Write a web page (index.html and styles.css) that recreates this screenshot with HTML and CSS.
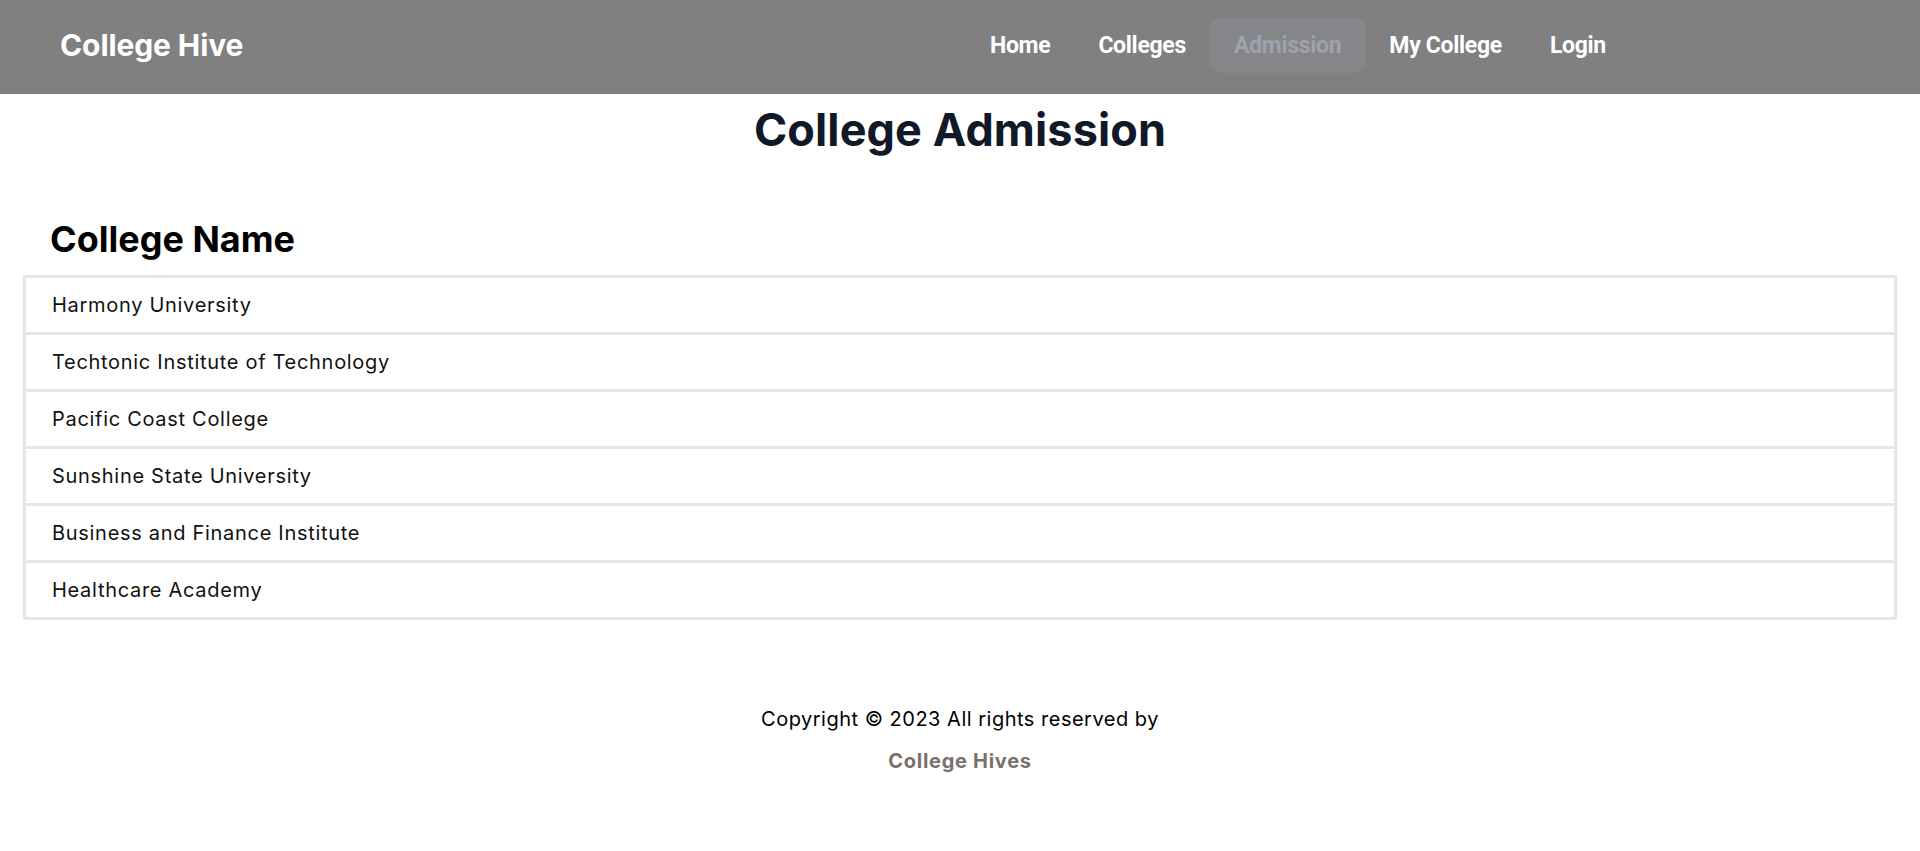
FILE: index.html
```html
<!DOCTYPE html>
<html lang="en">
<head>
<meta charset="utf-8">
<title>College Hive - Admission</title>
<link rel="stylesheet" href="styles.css">
</head>
<body>
<header class="navbar">
  <div class="navbar-start">
    <a class="logo" href="#">College Hive</a>
  </div>
  <nav class="menu">
    <a class="menu-item" href="#">Home</a>
    <a class="menu-item" href="#">Colleges</a>
    <a class="menu-item active" href="#">Admission</a>
    <a class="menu-item" href="#">My College</a>
    <a class="menu-item" href="#">Login</a>
  </nav>
</header>
<main class="content">
  <h1 class="page-title">College Admission</h1>
  <h2 class="section-title">College Name</h2>
  <ul class="college-list">
    <li class="college-row">Harmony University</li>
    <li class="college-row">Techtonic Institute of Technology</li>
    <li class="college-row">Pacific Coast College</li>
    <li class="college-row">Sunshine State University</li>
    <li class="college-row">Business and Finance Institute</li>
    <li class="college-row">Healthcare Academy</li>
  </ul>
</main>
<footer class="footer">
  <p class="copyright">Copyright © 2023 All rights reserved by</p>
  <p class="brand">College Hives</p>
</footer>
</body>
</html>
```
FILE: styles.css
```css
* { box-sizing: border-box; }
html, body { margin: 0; padding: 0; background: #ffffff; }
body { font-family: "Inter", "Noto Sans", sans-serif; color: #000; }

.navbar {
  height: 94px;
  background: #808080;
  display: flex;
  align-items: center;
  padding-bottom: 4px;
}
.navbar-start {
  width: 50%;
  padding-left: 60px;
}
.logo {
  color: #ffffff;
  font-family: "Inter", sans-serif;
  font-weight: 700;
  font-size: 30px;
  text-decoration: none;
  letter-spacing: -0.1px;
}
.menu {
  display: flex;
  align-items: center;
  padding-left: 6px;
}
.menu-item {
  display: flex;
  align-items: center;
  height: 55px;
  padding: 0 24px;
  border-radius: 9px;
  color: #ffffff;
  font-family: "Roboto", sans-serif;
  font-weight: 700;
  font-size: 23px;
  letter-spacing: -0.3px;
  text-decoration: none;
}
.menu-item.active {
  background: #86868a;
  color: #9ca3af;
}

.content { padding: 0 23px; }
.page-title {
  margin: 0;
  padding-top: 9px;
  text-align: center;
  font-size: 45px;
  font-weight: 700;
  color: #111827;
  line-height: 1.2;
  letter-spacing: 0.1px;
}
.section-title {
  margin: 61px 0 14px 27px;
  font-size: 36px;
  font-weight: 700;
  color: #000;
  line-height: 1.2;
}
.college-list {
  list-style: none;
  margin: 0;
  padding: 0;
  border: 3px solid #e6e6e6;
  border-bottom: 0;
}
.college-row {
  height: 57px;
  display: flex;
  align-items: center;
  padding-left: 26px;
  border-bottom: 3px solid #e6e6e6;
  font-size: 20px;
  letter-spacing: 0.7px;
  color: #111;
}

.footer {
  text-align: center;
  padding-top: 87px;
}
.copyright {
  margin: 0;
  font-size: 20px;
  letter-spacing: 0.5px;
  color: #000;
}
.brand {
  margin: 18px 0 0;
  font-size: 20px;
  font-weight: 700;
  letter-spacing: 0.7px;
  color: #78716c;
}
```
